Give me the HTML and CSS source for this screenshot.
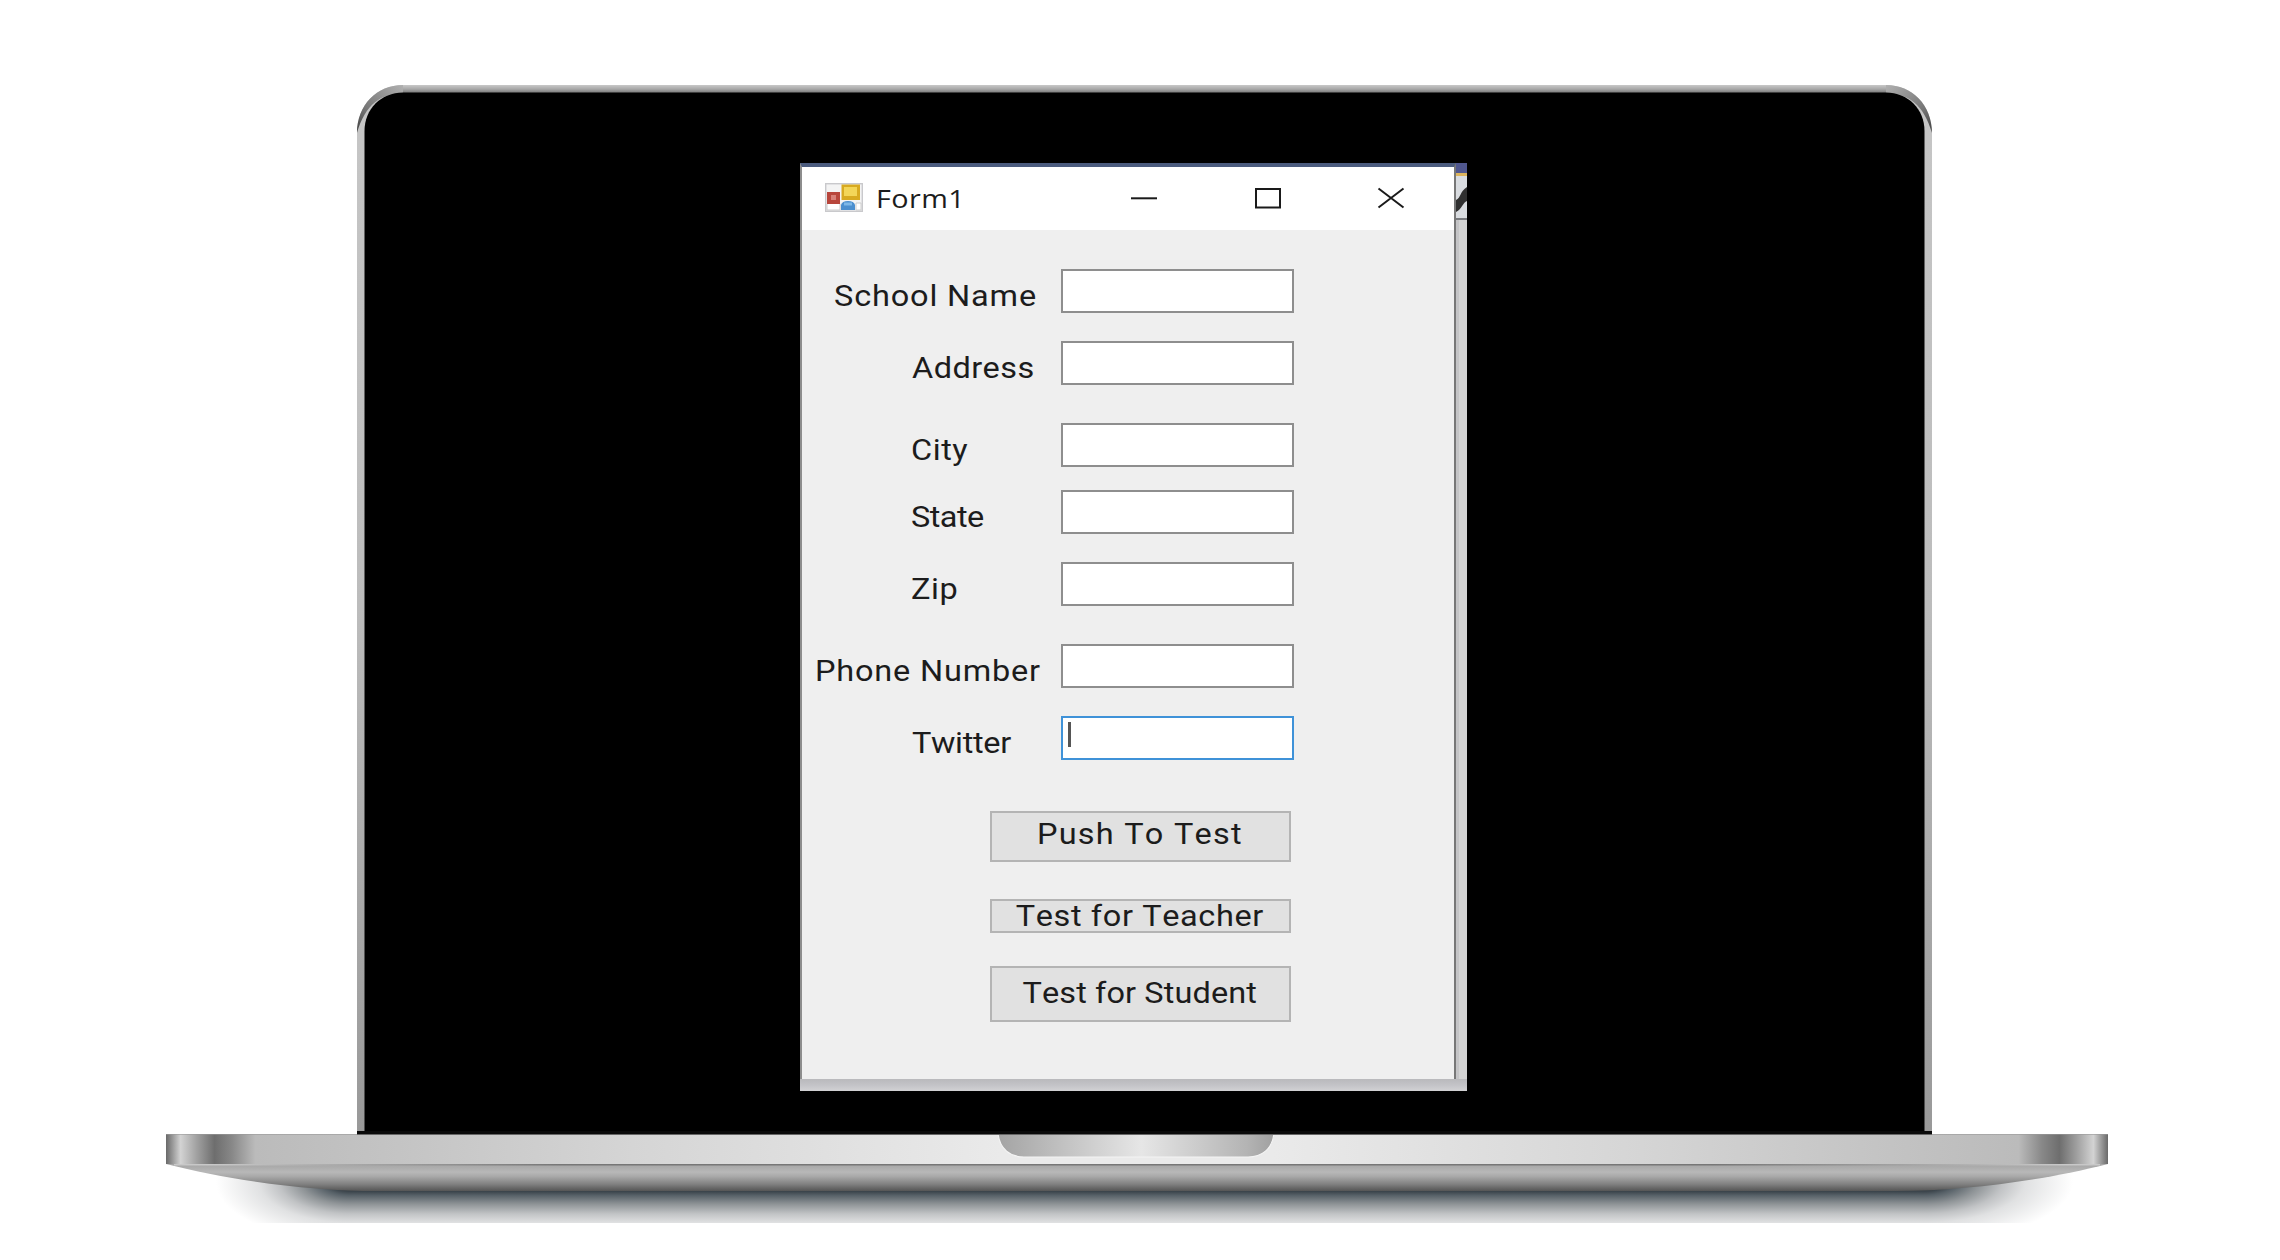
FILE: index.html
```html
<!DOCTYPE html>
<html lang="en">
<head>
<meta charset="utf-8">
<title>Form1</title>
<link rel="stylesheet" href="styles.css">
</head>
<body>
<main class="laptop">
  <div class="lid">
    <svg class="lid-frame" viewBox="0 0 1575 1049" aria-hidden="true">
      <defs>
        <linearGradient id="edge" x1="0" y1="0" x2="0" y2="1">
          <stop offset="0" stop-color="#c8c8c8"/><stop offset=".5" stop-color="#a8a8a8"/><stop offset="1" stop-color="#777"/>
        </linearGradient>
        <linearGradient id="side" x1="0" y1="0" x2="0" y2="1">
          <stop offset="0" stop-color="#c6c6c6"/><stop offset=".5" stop-color="#bcbcbc"/><stop offset="1" stop-color="#999"/>
        </linearGradient>
        <linearGradient id="cornerL" gradientUnits="userSpaceOnUse" x1="0" y1="46" x2="46" y2="0">
          <stop offset="0" stop-color="#444"/><stop offset=".35" stop-color="#777"/><stop offset="1" stop-color="#b0b0b0"/>
        </linearGradient>
        <linearGradient id="cornerR" gradientUnits="userSpaceOnUse" x1="1575" y1="46" x2="1529" y2="0">
          <stop offset="0" stop-color="#444"/><stop offset=".35" stop-color="#777"/><stop offset="1" stop-color="#b0b0b0"/>
        </linearGradient>
      </defs>
      <path fill="url(#side)" d="M0 1046V48C0 20 20 0 46 0H1529C1555 0 1575 20 1575 48V1046Z"/>
      <rect x="44" y="0" width="1487" height="8" fill="url(#edge)"/>
      <path fill="url(#cornerL)" d="M0 48C0 20 20 0 46 0V8C24 8 8 20 0 48Z"/>
      <path fill="url(#cornerR)" d="M1575 48C1575 20 1555 0 1529 0V8C1551 8 1567 20 1575 48Z"/>
      <path d="M7.500 1046V46C7.500 24 24 7.500 46 7.500H1529C1551 7.500 1567.500 24 1567.500 46V1046Z"/>
      <rect y="1046" width="1575" height="3" fill="#0a0a0a"/>
    </svg>

    <section class="capture">
      <div class="window">
        <header class="titlebar">
          <svg class="app-icon" viewBox="0 0 38 29" aria-hidden="true">
            <rect x=".7" y=".7" width="36.600" height="27.600" fill="#f4f4f4" stroke="#c9c9cc" stroke-width="1.400"/>
            <rect x="2" y="9" width="13" height="12" fill="#b8463c"/><rect x="6" y="12" width="5" height="5" fill="#d88078"/>
            <path d="M2 21v6h13v-6M31 20v7h5v-7z" fill="#fff" stroke="#ccc"/>
            <rect x="16.500" y="1.500" width="18.500" height="15.500" fill="#d8aa20"/><rect x="19" y="4" width="13" height="9" fill="#f3d658"/>
            <path d="M16 22Q17 18 23 18T30 22V27H16Z" fill="#4b8fcf"/><rect x="19" y="19.500" width="8" height="3" fill="#7db8e8"/>
          </svg>
          <h1 class="title">Form1</h1>
          <svg class="control" viewBox="0 0 28 24" aria-hidden="true"><path d="M1 12.300H27"/></svg>
          <svg class="control" viewBox="0 0 28 24" aria-hidden="true"><rect x="2" y="3" width="24" height="18.500"/></svg>
          <svg class="control" viewBox="0 0 28 24" aria-hidden="true"><path d="M1.500 2.500L26.500 21.500M26.500 2.500L1.500 21.500"/></svg>
        </header>
        <form class="form">
          <div class="row school"><span class="label">School Name</span><span class="field"></span></div>
          <div class="row address"><span class="label">Address</span><span class="field"></span></div>
          <div class="row city"><span class="label">City</span><span class="field"></span></div>
          <div class="row state"><span class="label">State</span><span class="field"></span></div>
          <div class="row zip"><span class="label">Zip</span><span class="field"></span></div>
          <div class="row phone"><span class="label">Phone Number</span><span class="field"></span></div>
          <div class="row twitter"><span class="label">Twitter</span><span class="field focused"><i class="caret"></i></span></div>
          <button class="button push" type="button"><span>Push To Test</span></button>
          <button class="button teacher" type="button"><span>Test for Teacher</span></button>
          <button class="button student" type="button"><span>Test for Student</span></button>
        </form>
      </div>
      <svg class="behind" viewBox="0 0 11 916" aria-hidden="true">
        <rect width="11" height="916" fill="#d3d3d3"/>
        <rect width="11" height="10" fill="#50578f"/>
        <rect y="10" width="11" height="3" fill="#dcb45c"/>
        <rect y="13" width="11" height="43" fill="#d9dce0"/>
        <path d="M0 37C5 35 4 28 11 24V38C7 39 6 46 0 49Z" fill="#303030"/>
        <rect y="55" width="11" height="2" fill="#77797d"/>
        <rect y="57" width="3" height="859" fill="#c4c4c6"/>
      </svg>
      <div class="shadow-strip"></div>
    </section>
  </div>

  <svg class="base" viewBox="0 0 1942 89" aria-hidden="true">
    <defs>
      <linearGradient id="bar">
        <stop offset="0" stop-color="#696969"/><stop offset=".0075" stop-color="#d3d3d3"/>
        <stop offset=".016" stop-color="#a0a0a0"/><stop offset=".025" stop-color="#6e6e6e"/><stop offset=".034" stop-color="#888"/>
        <stop offset=".046" stop-color="#bbb"/><stop offset=".12" stop-color="#c4c4c4"/>
        <stop offset=".24" stop-color="#d5d5d5"/><stop offset=".43" stop-color="#eaeaea"/><stop offset=".57" stop-color="#eaeaea"/>
        <stop offset=".76" stop-color="#d5d5d5"/><stop offset=".88" stop-color="#c4c4c4"/><stop offset=".954" stop-color="#bbb"/>
        <stop offset=".966" stop-color="#888"/><stop offset=".975" stop-color="#6e6e6e"/><stop offset=".984" stop-color="#a0a0a0"/>
        <stop offset=".9925" stop-color="#d3d3d3"/><stop offset="1" stop-color="#696969"/>
      </linearGradient>
      <linearGradient id="notch">
        <stop offset="0" stop-color="#a4a4a4"/><stop offset=".1" stop-color="#b0b0b0"/><stop offset=".52" stop-color="#e6e6e6"/>
        <stop offset=".9" stop-color="#b4b4b4"/><stop offset="1" stop-color="#a0a0a0"/>
      </linearGradient>
      <linearGradient id="under" x1="0" y1="0" x2="0" y2="1">
        <stop offset="0" stop-color="#a4a4a4"/><stop offset=".3" stop-color="#b8b8b8"/><stop offset=".45" stop-color="#aaa"/>
        <stop offset=".75" stop-color="#808080"/><stop offset="1" stop-color="#555"/>
      </linearGradient>
      <linearGradient id="seam">
        <stop offset=".02" stop-color="#c8c8c8"/><stop offset=".2" stop-color="#777"/><stop offset=".8" stop-color="#777"/><stop offset=".98" stop-color="#c8c8c8"/>
      </linearGradient>
      <linearGradient id="fall" gradientUnits="userSpaceOnUse" x1="0" y1="48" x2="0" y2="108">
        <stop offset=".15" stop-color="#384148"/><stop offset=".22" stop-color="#566067"/><stop offset=".37" stop-color="#8f9497"/>
        <stop offset=".53" stop-color="#c1c3c5"/><stop offset=".68" stop-color="#e0e1e2"/><stop offset="1" stop-color="#fff"/>
      </linearGradient>
      <radialGradient id="fallL" href="#fall" gradientUnits="userSpaceOnUse" cx="0" cy="0" r="1" gradientTransform="translate(185 48) scale(135 60)"/>
      <radialGradient id="fallR" href="#fall" gradientUnits="userSpaceOnUse" cx="0" cy="0" r="1" gradientTransform="translate(1757 48) scale(150 60)"/>
    </defs>
    <rect x="40" y="32" width="145" height="57" fill="url(#fallL)"/>
    <rect x="1757" y="32" width="150" height="57" fill="url(#fallR)"/>
    <rect x="184.500" y="48" width="1573" height="41" fill="url(#fall)"/>
    <path fill="url(#under)" d="M0 30H1942C1880 46 1800 57 1730 57H212C142 57 62 46 0 30Z"/>
    <rect width="1942" height="30" fill="url(#bar)"/>
    <rect width="1942" height="1" fill="#999" opacity=".6"/>
    <rect x="8" y="30" width="1926" height="1.500" fill="url(#seam)"/>
    <path d="M832 0C834 15 844 23 858 23H1082C1096 23 1106 15 1108 0Z" fill="url(#notch)" stroke="#f4f4f4" stroke-width="1.200"/>
    <rect x="191" width="1575" height="1" fill="#666"/>
  </svg>
</main>
</body>
</html>
```
FILE: styles.css
```css
* { box-sizing: border-box; }

body {
  margin: 0;
  width: 2280px;
  height: 1260px;
  overflow: hidden;
  background: #fff;
  font-family: Roboto, "Liberation Sans", sans-serif;
  color: #1c1c1c;
}

.laptop {
  width: 1942px;
  margin-left: 165.5px;
  padding-top: 85px;
}

.lid {
  display: grid;
  width: 1575px;
  height: 1049px;
  margin-left: 191.5px;
}

.lid-frame,
.capture { grid-area: 1 / 1; }

.lid-frame { width: 1575px; height: 1049px; }

.capture {
  display: grid;
  grid-template: 916px 12px / 656px 11px;
  align-self: start;
  width: 667px;
  height: 928px;
  margin: 78px 0 0 443px;
  background: #d0d0d0;
}

.window {
  border-top: 4px solid #4b5b7e;
  border-left: 2px solid #8d8d8d;
  border-right: 2px solid #777;
  background: #efefef;
}

.titlebar {
  display: flex;
  align-items: center;
  height: 63px;
  padding: 0 49px 2px 23px;
  background: #fff;
}

.app-icon { width: 38px; height: 29px; }

.title {
  flex: 1;
  margin: 0 0 0 12.5px;
  font: 400 25px/30px "Open Sans", "Noto Sans", sans-serif;
  letter-spacing: 0.4px;
  transform: scaleX(1.15);
  transform-origin: left;
}

.control {
  width: 28px;
  height: 24px;
  margin-left: 95.500px;
  fill: none;
  stroke: #1a1a1a;
  stroke-width: 2;
}

.title + .control { margin-left: 0; }

.form { padding-top: 39px; }

.row {
  display: flex;
  justify-content: space-between;
  width: 491.5px;
  height: 44px;
}

.label,
.button span {
  font-size: 29px;
  font-kerning: none;
  white-space: nowrap;
  transform: scaleX(1.12);
}

.label {
  padding-top: 6px;
  line-height: 43px;
  transform-origin: left;
}

.field {
  width: 233px;
  padding: 4px 5px;
  border: 2px solid #8e8e8e;
  background: #fff;
}

.focused { border-color: #3f92d8; }

.caret {
  display: block;
  width: 3px;
  height: 25px;
  background: #555;
}

.school { padding-left: 32px; letter-spacing: 0.75px; }
.address { margin-top: 28px; padding-left: 109.5px; letter-spacing: 0.4px; }
.city { margin-top: 38px; padding-left: 109px; letter-spacing: 0.5px; }
.state { margin-top: 23px; padding-left: 109px; letter-spacing: -0.5px; }
.zip { margin-top: 28px; padding-left: 109px; letter-spacing: 0.5px; }
.phone { margin-top: 38px; padding-left: 13px; letter-spacing: 0.72px; }
.twitter { margin-top: 28px; padding-left: 110px; letter-spacing: -0.3px; }

.button {
  display: flex;
  justify-content: center;
  width: 301px;
  margin-left: 187.500px;
  padding: 0;
  border: 2px solid #b4b4b4;
  background: #e1e1e1;
  color: inherit;
  font-family: inherit;
}

.button span { line-height: 34px; }

.push { height: 51px; margin-top: 51px; padding-top: 4px; letter-spacing: 1.1px; }
.teacher { height: 34px; margin-top: 37px; align-items: center; letter-spacing: 0.55px; }
.student { height: 56px; margin-top: 33px; padding-top: 8px; letter-spacing: 0.1px; }

.behind { width: 11px; height: 916px; }

.shadow-strip {
  grid-column: 1 / -1;
  background: linear-gradient(#b9b9bc, #c3c3c7 50%, #d2d2d4);
}

.base {
  display: block;
  width: 1942px;
  height: 89px;
}
```
